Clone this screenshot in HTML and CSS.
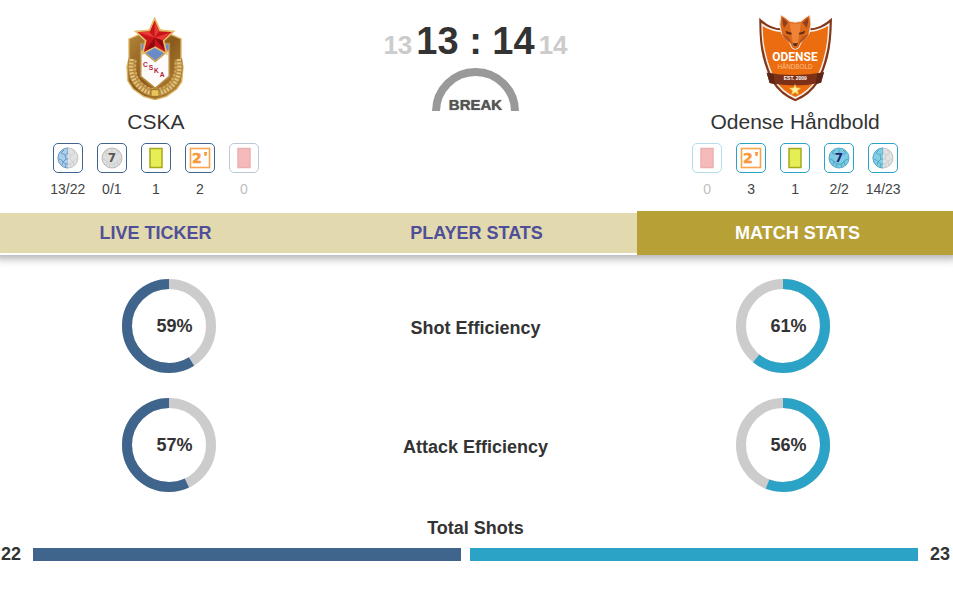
FILE: index.html
```
<!DOCTYPE html>
<html lang="en">

<head>
  <meta charset="UTF-8">
  <meta name="viewport" content="width=device-width, initial-scale=1">
  <title>CSKA - Odense Håndbold</title>
  <link rel="stylesheet" href="styles.css">
</head>

<body>

  <!-- shared shapes -->
  <svg class="defs" aria-hidden="true">
    <defs>
      <linearGradient id="gold" x1="0" y1="0" x2="1" y2="1">
        <stop offset="0" stop-color="#b98a3c" />
        <stop offset="0.5" stop-color="#8a5a1c" />
        <stop offset="1" stop-color="#b98a3c" />
      </linearGradient>
      <clipPath id="halfLeft"><rect x="0" y="0" width="11" height="22" /></clipPath>
      <symbol id="seams" viewBox="0 0 22 22">
        <path d="M8 8l3-2 3 2-1 4H9zM11 6V2M14 8l4-2M13 12l3 3M9 12l-3 3M8 8L4 6M4 6l3-3M18 6l-3-3M1.500 12l3 1 1.500 2-1 3M20.500 12l-3 1-1.500 2 1 3M6 15l3 2h4l3-2M9 17l-1 3M13 17l1 3" fill="none" stroke="currentColor" stroke-width="1" />
      </symbol>
      <symbol id="two" viewBox="0 0 22 22">
        <rect x="1.500" y="1.500" width="19" height="19" fill="#fff" stroke="#fba44d" stroke-width="1.600" />
        <text x="3" y="16" font-size="14" font-weight="bold" font-family="DejaVu Sans" fill="#f9993b" stroke="#f9993b" stroke-width="0.500">2</text>
        <path d="M15 5h3l-.5 4h-2z" fill="#f9993b" />
      </symbol>
      <symbol id="yellow" viewBox="0 0 22 22">
        <rect x="5" y="1.500" width="12" height="19" fill="#e6ee55" stroke="#a7a81d" stroke-width="1.500" />
      </symbol>
      <symbol id="red" viewBox="0 0 22 22">
        <rect x="5" y="1.500" width="12" height="19" fill="#ea3c3c" stroke="#c42222" stroke-width="1.500" />
      </symbol>
    </defs>
  </svg>

  <header class="match">
    <section class="team home">
      <div class="logo">
        <svg width="60" height="83" viewBox="33 20 180 249" role="img" aria-label="CSKA">
          <path d="M42 86L80 70l40-20 42 20 36 16v58l6 26-4 44-15 22-31 22-34 10-34-10-31-22-16-24-3-42 6-26z" fill="url(#gold)" stroke="#d9b263" stroke-width="4" />
          <path d="M52 146q-8 48 18 76 22 24 50 25 32-2 54-27 24-28 16-74" fill="none" stroke="#b4873f" stroke-width="23" />
          <path d="M50 146q-8 50 18 78 22 24 52 26 34-2 56-29 23-28 15-75" fill="none" stroke="#e3c27b" stroke-width="13" stroke-dasharray="6 4" />
          <path d="M62 150q-7 42 14 66 20 20 44 22 28-2 47-24 20-26 13-64" fill="none" stroke="#cfa55a" stroke-width="7" stroke-dasharray="7 5" />
          <path d="M77 100h86v98l-42 36-44-36z" fill="#fcfbfa" stroke="#b98a40" stroke-width="5" />
          <path d="M79 102h82v17l-40 34-42-34z" fill="#688cc9" />
          <path d="M79 119l42 34 40-34" fill="none" stroke="#c5a362" stroke-width="5" />
          <path d="M108 238h24v20h-24z" fill="#e9c45b" stroke="#987127" stroke-width="3" />
          <path d="M119 24l16 36 41 3-30 28 9 39-36-20-36 20 9-39-30-28 41-3z" fill="#c7151b" stroke="#e5bd69" stroke-width="5" />
          <path d="M119 31v51l13-20zM119 82l50-16-27 24zM119 82l-50-16 33-2z" fill="#ea3a36" />
          <path d="M119 82l29 37-6-29zM119 82v27l-28 12z" fill="#8f0910" />
          <g class="badge-letters">
            <text x="84" y="169">C</text>
            <text x="101" y="179">S</text>
            <text x="117" y="189">K</text>
            <text x="134" y="199">A</text>
          </g>
        </svg>
      </div>
      <h1>CSKA</h1>
      <ul class="events">
        <li>
          <span class="icon"><svg viewBox="0 0 22 22"><circle cx="11" cy="11" r="10" fill="#e1e1e1" stroke="#c4c4c4" /><circle cx="11" cy="11" r="10" fill="#a8cfef" stroke="#6f9bc4" clip-path="url(#halfLeft)" /><use href="#seams" color="#cfd2d5" /><use href="#seams" color="#6799c5" clip-path="url(#halfLeft)" /></svg></span>
          13/22
        </li>
        <li>
          <span class="icon"><svg viewBox="0 0 22 22"><circle cx="11" cy="11" r="10" fill="#dedede" stroke="#b9b9b9" /><use href="#seams" color="#cdcdcd" /><circle cx="11" cy="11" r="6" fill="#dedede" /><text class="seven" x="11" y="15" fill="#555">7</text></svg></span>
          0/1
        </li>
        <li>
          <span class="icon"><svg><use href="#yellow" /></svg></span>
          1
        </li>
        <li>
          <span class="icon"><svg><use href="#two" /></svg></span>
          2
        </li>
        <li class="none">
          <span class="icon"><svg><use href="#red" /></svg></span>
          0
        </li>
      </ul>
    </section>

    <section class="result">
      <div class="score">
        <span class="half">13</span>
        <strong>13 : 14</strong>
        <span class="half">14</span>
      </div>
      <div class="clock">
        <svg width="87" height="43" viewBox="0 0 87 43" aria-hidden="true">
          <path d="M4 43.500a39.500 39.500 0 0 1 79 0" fill="none" stroke="#999" stroke-width="8" />
        </svg>
        <span>BREAK</span>
      </div>
    </section>

    <section class="team away">
      <div class="logo">
        <svg width="75" height="88" viewBox="39 27 225 264" role="img" aria-label="Odense Håndbold">
          <path d="M151 57q-17 14-42 13-34 0-66-32-1 75 10 117 9 38 29 77 24 39 69 57 45-18 69-57 20-39 29-77 11-42 12-117-34 32-68 32-27 0-42-13z" fill="#853719" />
          <path d="M151 64q-17 13-42 12-33-1-60-23 0 62 11 100 8 38 28 75 20 35 63 54 43-19 63-54 20-37 28-75 11-38 12-100-29 22-61 23-27 1-42-12z" fill="#f4f0ec" />
          <path d="M151 69q-17 13-42 12-31-1-56-18 1 54 11 88 8 37 27 73 19 33 60 52 41-19 60-52 19-36 27-73 10-34 11-88-27 17-57 18-25 1-41-12z" fill="#ec6d10" />
          <path d="M108 30q11 5 26 19 17 5 34 0 15-14 26-19 8 28-1 54-8 16-24 28l-8 17q-10 9-20 0l-8-17q-16-12-24-28-9-26-1-54z" fill="#dc681a" stroke="#f3e8dc" stroke-width="3" />
          <path d="M112 38q9 6 17 15l-12 15q-6-13-5-30zM190 38q-9 6-17 15l12 15q6-13 5-30z" fill="#8f4020" />
          <path d="M134 54q17 5 34 0l-4 26-6 34h-14l-6-34z" fill="#ee8438" />
          <path d="M121 77l20 7-3 5-13-3zM181 77l-20 7 3 5 13-3z" fill="#672c16" />
          <path d="M110 86l20 10 12 20q-20-8-32-30zM192 86l-20 10-12 20q20-8 32-30z" fill="#b5521d" />
          <path d="M143 115h16l-4 8h-8z" fill="#553126" />
          <text class="shield-name" x="150" y="168">ODENSE</text>
          <text class="shield-sub" x="150" y="193">HÅNDBOLD</text>
          <path d="M65 203q86 14 172-1l-9 31q-78 16-154 1z" fill="#7c3018" />
          <path d="M65 203l9 31 16 4-5-32zM237 202l-9 31-16 5 5-32z" fill="#5f2616" />
          <text class="shield-year" x="151" y="226">EST. 2009</text>
          <path d="M150 239l4 10 12 1-9 7 3 11-10-6-10 6 3-11-9-7 12-1z" fill="#fff2a4" stroke="#f4c752" stroke-width="2" />
        </svg>
      </div>
      <h1>Odense Håndbold</h1>
      <ul class="events">
        <li class="none">
          <span class="icon"><svg><use href="#red" /></svg></span>
          0
        </li>
        <li>
          <span class="icon"><svg><use href="#two" /></svg></span>
          3
        </li>
        <li>
          <span class="icon"><svg><use href="#yellow" /></svg></span>
          1
        </li>
        <li>
          <span class="icon"><svg viewBox="0 0 22 22"><circle cx="11" cy="11" r="10" fill="#7bc9e2" stroke="#58aecb" /><use href="#seams" color="#4ca7c6" /><circle cx="11" cy="11" r="5" fill="#83cde5" /><text class="seven" x="11" y="15" fill="#20246b">7</text></svg></span>
          2/2
        </li>
        <li>
          <span class="icon"><svg viewBox="0 0 22 22"><circle cx="11" cy="11" r="10" fill="#e1e1e1" stroke="#c4c4c4" /><circle cx="11" cy="11" r="10" fill="#82cee6" stroke="#4daccb" clip-path="url(#halfLeft)" /><use href="#seams" color="#cfcfcf" /><use href="#seams" color="#49abcb" clip-path="url(#halfLeft)" /></svg></span>
          14/23
        </li>
      </ul>
    </section>
  </header>

  <nav class="tabs">
    <a href="#ticker">LIVE TICKER</a>
    <a href="#players">PLAYER STATS</a>
    <a href="#stats" class="active" aria-current="page">MATCH STATS</a>
  </nav>

  <main id="stats">
    <div class="efficiency">
      <div class="ring home">
        <svg viewBox="0 0 94 94"><circle cx="47" cy="47" r="42" /><circle class="value" cx="47" cy="47" r="42" pathLength="100" style="stroke-dasharray: 59 100" /></svg>
        <span>59%</span>
      </div>
      <h2>Shot Efficiency</h2>
      <div class="ring away">
        <svg viewBox="0 0 94 94"><circle cx="47" cy="47" r="42" /><circle class="value" cx="47" cy="47" r="42" pathLength="100" style="stroke-dasharray: 61 100" /></svg>
        <span>61%</span>
      </div>

      <div class="ring home">
        <svg viewBox="0 0 94 94"><circle cx="47" cy="47" r="42" /><circle class="value" cx="47" cy="47" r="42" pathLength="100" style="stroke-dasharray: 57 100" /></svg>
        <span>57%</span>
      </div>
      <h2>Attack Efficiency</h2>
      <div class="ring away">
        <svg viewBox="0 0 94 94"><circle cx="47" cy="47" r="42" /><circle class="value" cx="47" cy="47" r="42" pathLength="100" style="stroke-dasharray: 56 100" /></svg>
        <span>56%</span>
      </div>
    </div>

    <div class="total">
      <h2>Total Shots</h2>
      <div class="bars">
        <span>22</span>
        <div class="track">
          <div class="bar home" style="flex-grow: 22"></div>
          <div class="bar away" style="flex-grow: 23"></div>
        </div>
        <span>23</span>
      </div>
    </div>
  </main>

</body>

</html>
```

FILE: styles.css
```
* {
  box-sizing: border-box;
}

body {
  margin: 0;
  font-family: "Liberation Sans", Arial, sans-serif;
  color: #333;
  background: #fff;
  overflow-x: hidden;
}

h1,
h2,
ul {
  margin: 0;
  padding: 0;
}

.defs {
  position: absolute;
  width: 0;
  height: 0;
}

.home {
  --team: #3f658c;
}

.away {
  --team: #2ba3c6;
}

/* header */
.match {
  display: grid;
  grid-template-columns: 1fr 1fr 1fr;
  gap: 8px;
  padding: 14px 2px 13px 0;
}

.team {
  display: flex;
  flex-direction: column;
  align-items: center;
}

.logo {
  height: 88px;
  display: flex;
  align-items: center;
}

.team h1 {
  margin: 8px 0 9px;
  font-size: 21px;
  line-height: 24px;
  font-weight: normal;
}

.badge-letters {
  font-size: 20px;
  font-weight: bold;
  fill: #b31c36;
}

.shield-name,
.shield-sub,
.shield-year {
  text-anchor: middle;
  fill: #fff;
}

.shield-name {
  font-family: Roboto, "Liberation Sans", sans-serif;
  font-size: 36px;
  font-weight: bold;
}

.shield-sub {
  font-size: 19px;
  fill: #f9c08d;
}

.shield-year {
  font-size: 15px;
  font-weight: bold;
}

.events {
  display: flex;
  list-style: none;
}

.events li {
  width: 44px;
  display: flex;
  flex-direction: column;
  align-items: center;
  gap: 7px;
  font-size: 14px;
  line-height: 18px;
  color: #444;
}

.events .none {
  opacity: 0.35;
}

.icon {
  width: 30px;
  height: 30px;
  display: flex;
  align-items: center;
  justify-content: center;
  border: 1px solid var(--team);
  border-radius: 5px;
}

.icon svg {
  width: 22px;
  height: 22px;
}

.seven {
  font-family: "DejaVu Sans", sans-serif;
  font-size: 12px;
  font-weight: bold;
  text-anchor: middle;
}

.result {
  display: flex;
  flex-direction: column;
  align-items: center;
}

.score {
  height: 54px;
  display: flex;
  align-items: baseline;
  gap: 4px;
  padding-top: 5px;
}

.score strong {
  font-size: 38px;
  line-height: 44px;
}

.score .half {
  font-size: 26px;
  font-weight: bold;
  color: #ccc;
}

.clock {
  display: grid;
  justify-items: center;
  align-items: end;
}

.clock svg,
.clock span {
  grid-area: 1 / 1;
}

.clock span {
  font-size: 15px;
  line-height: 12px;
  font-weight: bold;
  color: #555;
  text-shadow: 0 0 1px #555;
}

/* tabs */
.tabs {
  display: flex;
  align-items: flex-start;
  margin: 0 -5px;
  height: 44px;
  box-shadow: 0 4px 8px rgba(0, 0, 0, 0.3);
  clip-path: inset(0 0 -16px 0);
}

.tabs a {
  flex: 1;
  margin-top: 2px;
  line-height: 40px;
  font-size: 18px;
  font-weight: bold;
  text-align: center;
  text-decoration: none;
  color: #4f4f99;
  background: #e2d9ae;
}

.tabs a.active {
  margin-top: 0;
  line-height: 44px;
  color: #fff;
  background: #b7a137;
}

/* stats */
main h2 {
  font-size: 18px;
  line-height: 24px;
  text-align: center;
}

.efficiency {
  display: grid;
  grid-template-columns: 1fr 1fr 1fr;
  align-items: center;
  row-gap: 25px;
  padding: 24px 17px 0 15px;
}

.efficiency h2 {
  padding-top: 4px;
}

.ring {
  display: grid;
  place-items: center;
  font-size: 18px;
  font-weight: bold;
}

.ring svg,
.ring span {
  grid-area: 1 / 1;
}

.ring svg {
  width: 94px;
  height: 94px;
  fill: none;
  stroke: #ccc;
  stroke-width: 10px;
  transform: rotate(-90deg);
}

.ring.home svg {
  transform: rotate(-90deg) scaleY(-1);
}

.ring .value {
  stroke: var(--team);
}

.ring span {
  padding-left: 12px;
}

.total {
  padding: 24px 3px 0 1px;
}

.bars {
  display: flex;
  align-items: center;
  gap: 12px;
  margin-top: 2px;
  font-size: 18px;
  line-height: 24px;
  font-weight: bold;
}

.track {
  flex: 1;
  display: flex;
  gap: 9px;
}

.bar {
  flex-basis: 0;
  height: 13px;
  background: var(--team);
}
```
